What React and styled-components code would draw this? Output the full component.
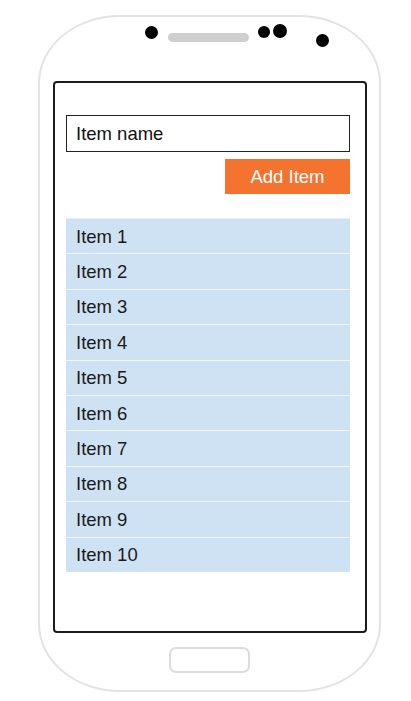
import React from "react";
import styled, { createGlobalStyle } from "styled-components";

const Global = createGlobalStyle`
  html, body { margin: 0; padding: 0; background: #fff; }
  body { font-family: "Liberation Sans", Arial, sans-serif; }
  * { box-sizing: border-box; }
`;

const Phone = styled.div`
  width: 343px;
  height: 677px;
  margin: 15px 0 0 38px;
  border: 2px solid #e3e3e3;
  border-radius: 82px / 68px;
  display: flex;
  flex-direction: column;
  align-items: center;
  background: #fff;
`;

const Header = styled.div`
  width: 314px;
  height: 64px;
  display: flex;
  align-items: flex-start;
  flex-shrink: 0;
`;

const Dot = styled.div`
  width: ${(p) => p.$size}px;
  height: ${(p) => p.$size}px;
  border-radius: 50%;
  background: #000;
  margin-left: ${(p) => p.$left}px;
  margin-top: ${(p) => p.$top}px;
  flex-shrink: 0;
`;

const Speaker = styled.div`
  width: 81px;
  height: 9px;
  border-radius: 5px;
  background: #cfcfcf;
  margin-left: 10.5px;
  margin-top: 16px;
  flex-shrink: 0;
`;

const Screen = styled.div`
  width: 314px;
  height: 552px;
  border: 2px solid #1c1c1c;
  border-radius: 4px;
  padding: 32px 14.5px 0 11.5px;
  display: flex;
  flex-direction: column;
  flex-shrink: 0;
`;

const NameInput = styled.input`
  width: 100%;
  height: 37px;
  border: 1px solid #222;
  border-radius: 0;
  padding: 0 0 0 9px;
  font-family: "Liberation Sans", Arial, sans-serif;
  font-size: 18.5px;
  color: #111;
  outline: none;
  background: #fff;
`;

const AddButton = styled.button`
  align-self: flex-end;
  margin-top: 7px;
  width: 125px;
  height: 35px;
  border: none;
  border-radius: 0;
  background: #f3732f;
  color: #fff;
  font-family: "Liberation Sans", Arial, sans-serif;
  font-size: 18.5px;
  padding: 0;
`;

const List = styled.ul`
  list-style: none;
  margin: 24px 0 0;
  padding: 0;
  display: flex;
  flex-direction: column;
`;

const Row = styled.li`
  height: 35.4px;
  display: flex;
  align-items: center;
  padding-left: 10px;
  padding-top: 1px;
  background: #cfe2f3;
  border-top: 1px solid ${(p) => (p.$first ? "#e4eef8" : "#f2f7fc")};
  font-size: 18.5px;
  color: #1a1a1a;
`;

const HomeButton = styled.div`
  margin-top: 14px;
  width: 81px;
  height: 26px;
  border: 2px solid #dcdcdc;
  border-radius: 7px;
  flex-shrink: 0;
`;

export default function App() {
  const items = Array.from({ length: 10 }, (_, i) => `Item ${i + 1}`);
  return (
    <>
      <Global />
      <Phone>
        <Header>
          <Dot $size={13} $left={92} $top={9} />
          <Speaker />
          <Dot $size={12} $left={9} $top={9} />
          <Dot $size={14} $left={3} $top={7} />
          <Dot $size={13} $left={28.5} $top={16.5} />
        </Header>
        <Screen>
          <NameInput defaultValue="Item name" />
          <AddButton>Add Item</AddButton>
          <List>
            {items.map((t, i) => (
              <Row key={t} $first={i === 0}>
                {t}
              </Row>
            ))}
          </List>
        </Screen>
        <HomeButton />
      </Phone>
    </>
  );
}
